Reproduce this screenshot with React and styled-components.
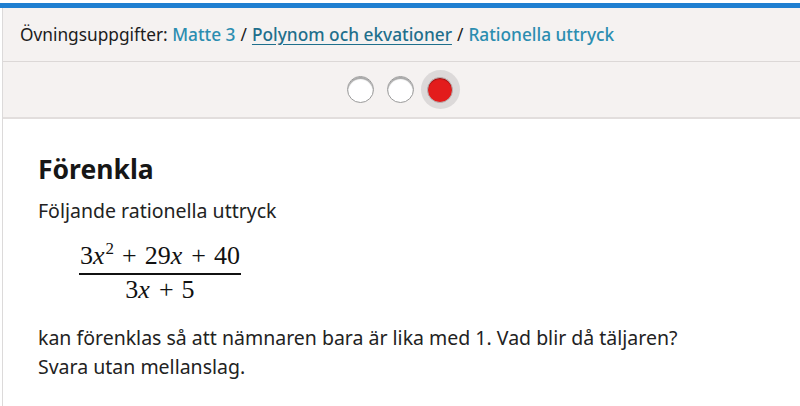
import React from 'react';
import styled, { createGlobalStyle } from 'styled-components';

const GlobalStyle = createGlobalStyle`
  body {
    margin: 0;
    background: #ffffff;
    font-family: "Noto Sans", "Open Sans", sans-serif;
    color: #1f1f1f;
  }
`;

const TopBar = styled.div`
  margin-top: 3px;
  height: 5px;
  background: #1f7fd1;
`;

const Page = styled.div`
  margin-left: 2px;
  border-left: 1px solid #dcdada;
  min-height: 398px;
`;

const Breadcrumb = styled.div`
  display: flex;
  align-items: center;
  height: 53px;
  padding-left: 17px;
  background: #f5f2f1;
  border-bottom: 1px solid #dcd8d7;
  font-size: 17.3px;
  color: #1c1c1c;
`;

const Crumb = styled.span`
  color: ${(p) => (p.$underline ? '#1f6f8c' : '#2b8db0')};
  text-decoration: ${(p) => (p.$underline ? 'underline' : 'none')};
  text-underline-offset: 3px;
  font-weight: 500;
`;

const Sep = styled.span`
  margin: 0 5px;
`;

const StepRow = styled.div`
  display: flex;
  justify-content: center;
  align-items: center;
  gap: 13px;
  height: 55px;
  background: #f5f2f1;
  border-bottom: 2px solid #e2dedd;
  padding-left: 3px;
`;

const Step = styled.div`
  box-sizing: border-box;
  width: 27px;
  height: 27px;
  border-radius: 50%;
  background: #ffffff;
  border: 1px solid #9a9a9a;
  box-shadow: inset 0 2px 1px rgba(0, 0, 0, 0.35);
`;

const ActiveRing = styled.div`
  display: flex;
  align-items: center;
  justify-content: center;
  width: 39px;
  height: 39px;
  border-radius: 50%;
  background: #dcd9d9;
  margin-left: -6px;
`;

const ActiveDot = styled.div`
  box-sizing: border-box;
  width: 26px;
  height: 26px;
  border-radius: 50%;
  background: #e31c1c;
  border: 1px solid #b5b5b5;
  box-shadow: inset 0 1px 1px rgba(0, 0, 0, 0.35);
`;

const Content = styled.div`
  padding: 33px 0 0 35px;
`;

const Title = styled.h1`
  margin: 0;
  font-size: 26.5px;
  font-weight: 700;
  line-height: 34px;
  color: #161616;
`;

const Text = styled.p`
  margin: ${(p) => p.$margin || '0'};
  font-size: 19.5px;
  line-height: 29px;
  color: #222222;
`;

const Fraction = styled.div`
  display: inline-flex;
  flex-direction: column;
  align-items: center;
  margin: 17px 0 0 41px;
  font-family: "Liberation Serif", "DejaVu Serif", serif;
  font-size: 26px;
  color: #111111;
`;

const Numer = styled.div`
  padding: 0 1px 3px;
  line-height: 28px;
`;

const Denom = styled.div`
  align-self: stretch;
  text-align: center;
  border-top: 2px solid #111111;
  padding-top: 1px;
  line-height: 28px;
`;

const Var = styled.i`
  font-style: italic;
  margin-right: 1px;
`;

const Sup = styled.sup`
  font-size: 17px;
  line-height: 0;
  vertical-align: 10px;
`;

const Op = styled.span`
  margin: 0 8px;
`;

export default function App() {
  return (
    <>
      <GlobalStyle />
      <TopBar />
      <Page>
        <Breadcrumb>
          Övningsuppgifter:&nbsp;<Crumb>Matte 3</Crumb>
          <Sep>/</Sep>
          <Crumb $underline>Polynom och ekvationer</Crumb>
          <Sep>/</Sep>
          <Crumb>Rationella uttryck</Crumb>
        </Breadcrumb>
        <StepRow>
          <Step />
          <Step />
          <ActiveRing>
            <ActiveDot />
          </ActiveRing>
        </StepRow>
        <Content>
          <Title>Förenkla</Title>
          <Text $margin="10px 0 0">Följande rationella uttryck</Text>
          <Fraction>
            <Numer>
              3<Var>x</Var>
              <Sup>2</Sup>
              <Op>+</Op>29<Var>x</Var>
              <Op>+</Op>40
            </Numer>
            <Denom>
              3<Var>x</Var>
              <Op>+</Op>5
            </Denom>
          </Fraction>
          <Text $margin="19px 0 0">
            kan förenklas så att nämnaren bara är lika med 1. Vad blir då täljaren?
            <br />
            Svara utan mellanslag.
          </Text>
        </Content>
      </Page>
    </>
  );
}
